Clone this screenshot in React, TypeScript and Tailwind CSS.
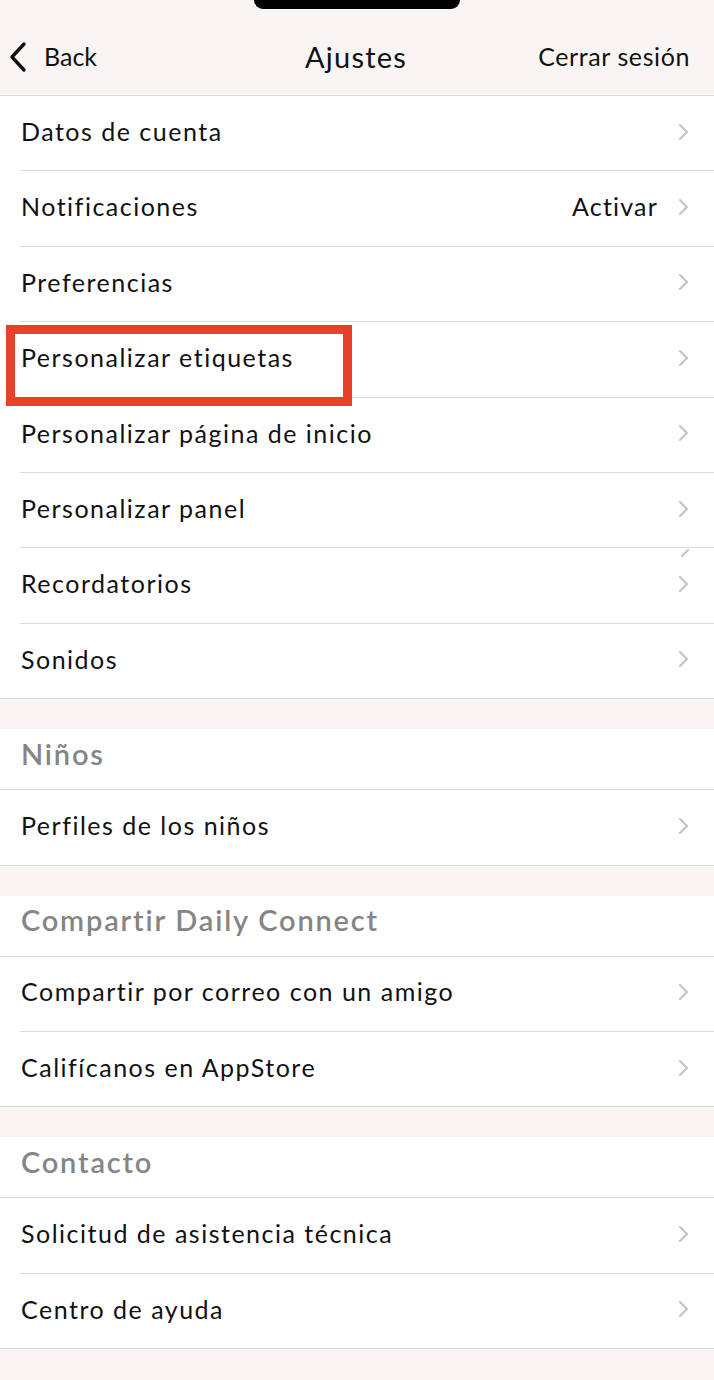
import React from "react";

type Row = { label: string; value?: string; extra?: boolean };

const groupOne: Row[] = [
  { label: "Datos de cuenta" },
  { label: "Notificaciones", value: "Activar" },
  { label: "Preferencias" },
  { label: "Personalizar etiquetas" },
  { label: "Personalizar página de inicio" },
  { label: "Personalizar panel" },
  { label: "Recordatorios", extra: true },
  { label: "Sonidos" },
];

const sections: { title: string; rows: Row[] }[] = [
  { title: "Niños", rows: [{ label: "Perfiles de los niños" }] },
  {
    title: "Compartir Daily Connect",
    rows: [{ label: "Compartir por correo con un amigo" }, { label: "Califícanos en AppStore" }],
  },
  {
    title: "Contacto",
    rows: [{ label: "Solicitud de asistencia técnica" }, { label: "Centro de ayuda" }],
  },
];

const Chevron = () => (
  <svg width="12" height="18" viewBox="0 0 12 18" fill="none" className="shrink-0">
    <path d="M2 2l7 7-7 7" stroke="#c7c7c7" strokeWidth="2.4" strokeLinecap="round" strokeLinejoin="round" />
  </svg>
);

const ListRow = ({ row, last }: { row: Row; last: boolean }) => (
  <div className="relative h-[75.4px] bg-white">
    <div className="flex h-full items-center pl-[21px] pr-[24px] pb-[4px]">
      <span className="flex-1 text-[25px] tracking-[1.5px] text-[#111]">{row.label}</span>
      {row.value && <span className="mr-[20px] text-[25px] tracking-[1.2px] text-[#111]">{row.value}</span>}
      <Chevron />
    </div>
    {row.extra && (
      <svg width="10" height="10" viewBox="0 0 10 10" className="absolute right-[24px] top-0">
        <path d="M2 8l6-6" stroke="#c7c7c7" strokeWidth="2.4" strokeLinecap="round" />
      </svg>
    )}
    <div className={`absolute bottom-0 right-0 h-px bg-[#dcdcdc] ${last ? "left-0" : "left-[20px]"}`} />
  </div>
);

export default function App() {
  return (
    <div className="min-h-[1380px] w-[714px] bg-[#f8f5f4] font-['Lato',sans-serif]">
      <header className="relative h-[96px] border-b border-[#dcdcdc] bg-[#f8f5f4]">
        <div className="absolute left-[254px] top-0 h-[9px] w-[206px] rounded-b-[18px] bg-black" />
        <div className="flex h-full items-center pt-[18px] pr-[24px] pl-[8px]">
          <div className="flex flex-1 items-center gap-[16px]">
            <svg width="20" height="32" viewBox="0 0 20 32" fill="none">
              <path d="M16 3L4 16l12 13" stroke="#111" strokeWidth="3.4" strokeLinecap="round" strokeLinejoin="round" />
            </svg>
            <span className="text-[25px] text-[#111]">Back</span>
          </div>
          <span className="ml-[14px] text-[29px] tracking-[1.2px] text-[#111]">Ajustes</span>
          <div className="flex flex-1 justify-end">
            <span className="text-[25px] tracking-[0.6px] text-[#111]">Cerrar sesión</span>
          </div>
        </div>
      </header>

      <div className="relative">
        {groupOne.map((row, i) => (
          <ListRow key={row.label} row={row} last={i === groupOne.length - 1} />
        ))}
        <div className="pointer-events-none absolute left-[6px] top-[229px] h-[81px] w-[346px] border-[9px] border-[#e8402a]" />
      </div>

      {sections.map((section) => (
        <div key={section.title} className="pt-[30px]">
          <div className="relative flex h-[61px] items-center bg-white pl-[21px] pb-[12px]">
            <span className="text-[29px] font-semibold tracking-[1.8px] text-[#858585]">{section.title}</span>
            <div className="absolute bottom-0 left-0 right-0 h-px bg-[#dcdcdc]" />
          </div>
          {section.rows.map((row, i) => (
            <ListRow key={row.label} row={row} last={i === section.rows.length - 1} />
          ))}
        </div>
      ))}
    </div>
  );
}
